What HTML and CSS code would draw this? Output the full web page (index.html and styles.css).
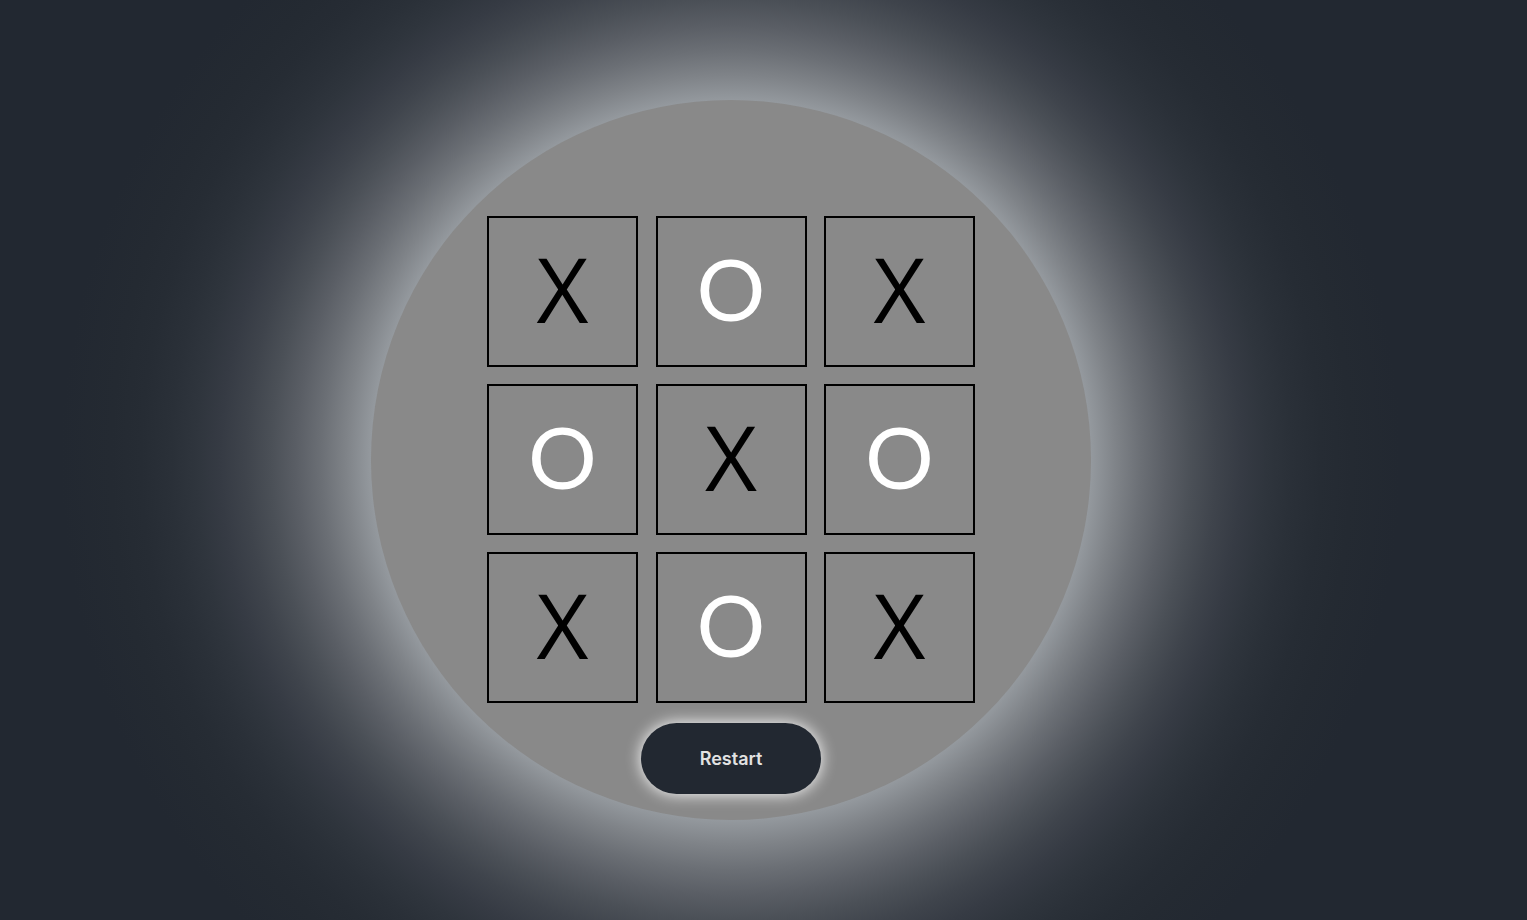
FILE: index.html
```html
<!DOCTYPE html>
<html lang="en">
<head>
<meta charset="utf-8">
<title>Tic Tac Toe</title>
<link rel="stylesheet" href="styles.css">
</head>
<body>
<main class="stage">
  <div class="disc">
    <div class="board">
      <div class="cell x">X</div>
      <div class="cell o">O</div>
      <div class="cell x">X</div>
      <div class="cell o">O</div>
      <div class="cell x">X</div>
      <div class="cell o">O</div>
      <div class="cell x">X</div>
      <div class="cell o">O</div>
      <div class="cell x">X</div>
    </div>
    <button class="restart">Restart</button>
  </div>
</main>
</body>
</html>
```
FILE: styles.css
```css
html, body {
  margin: 0;
  padding: 0;
  height: 100%;
  background: #222831;
  overflow: hidden;
}
.stage {
  height: 100vh;
  display: flex;
  align-items: center;
  justify-content: center;
  padding-right: 65px;
  box-sizing: border-box;
  background: radial-gradient(circle at 731px 460px,
    #959a9f 359px,
    #7f8388 385px,
    #6b6f75 410px,
    #5a5e65 435px,
    #4b5057 460px,
    #3f444c 485px,
    #363b44 510px,
    #2f353d 535px,
    #2a3038 560px,
    #262c34 590px,
    #242a32 620px,
    #222831 670px);
}
.disc {
  width: 720px;
  height: 720px;
  border-radius: 50%;
  background: #898989;
  display: flex;
  flex-direction: column;
  align-items: center;
  padding-top: 116px;
  box-sizing: border-box;
}
.board {
  display: grid;
  grid-template-columns: repeat(3, 151px);
  grid-template-rows: repeat(3, 151px);
  column-gap: 17.5px;
  row-gap: 17px;
}
.cell {
  box-sizing: border-box;
  border: 2px solid #000;
  padding-bottom: 8px;
  display: flex;
  align-items: center;
  justify-content: center;
  line-height: 1;
  font-weight: 400;
}
.cell.x {
  color: #000;
  font-family: "Open Sans", "Liberation Sans", sans-serif;
  font-size: 90px;
}
.cell.o {
  color: #fff;
  font-family: Lato, "Liberation Sans", sans-serif;
  font-size: 86px;
}
.restart {
  margin-top: 20px;
  width: 180px;
  height: 71px;
  border: none;
  border-radius: 36px;
  background: #222831;
  color: #e2e2e2;
  font-family: Inter, "Noto Sans", sans-serif;
  font-weight: 600;
  font-size: 18px;
  box-shadow: 0 0 16px #ffffff;
  cursor: pointer;
}
```
